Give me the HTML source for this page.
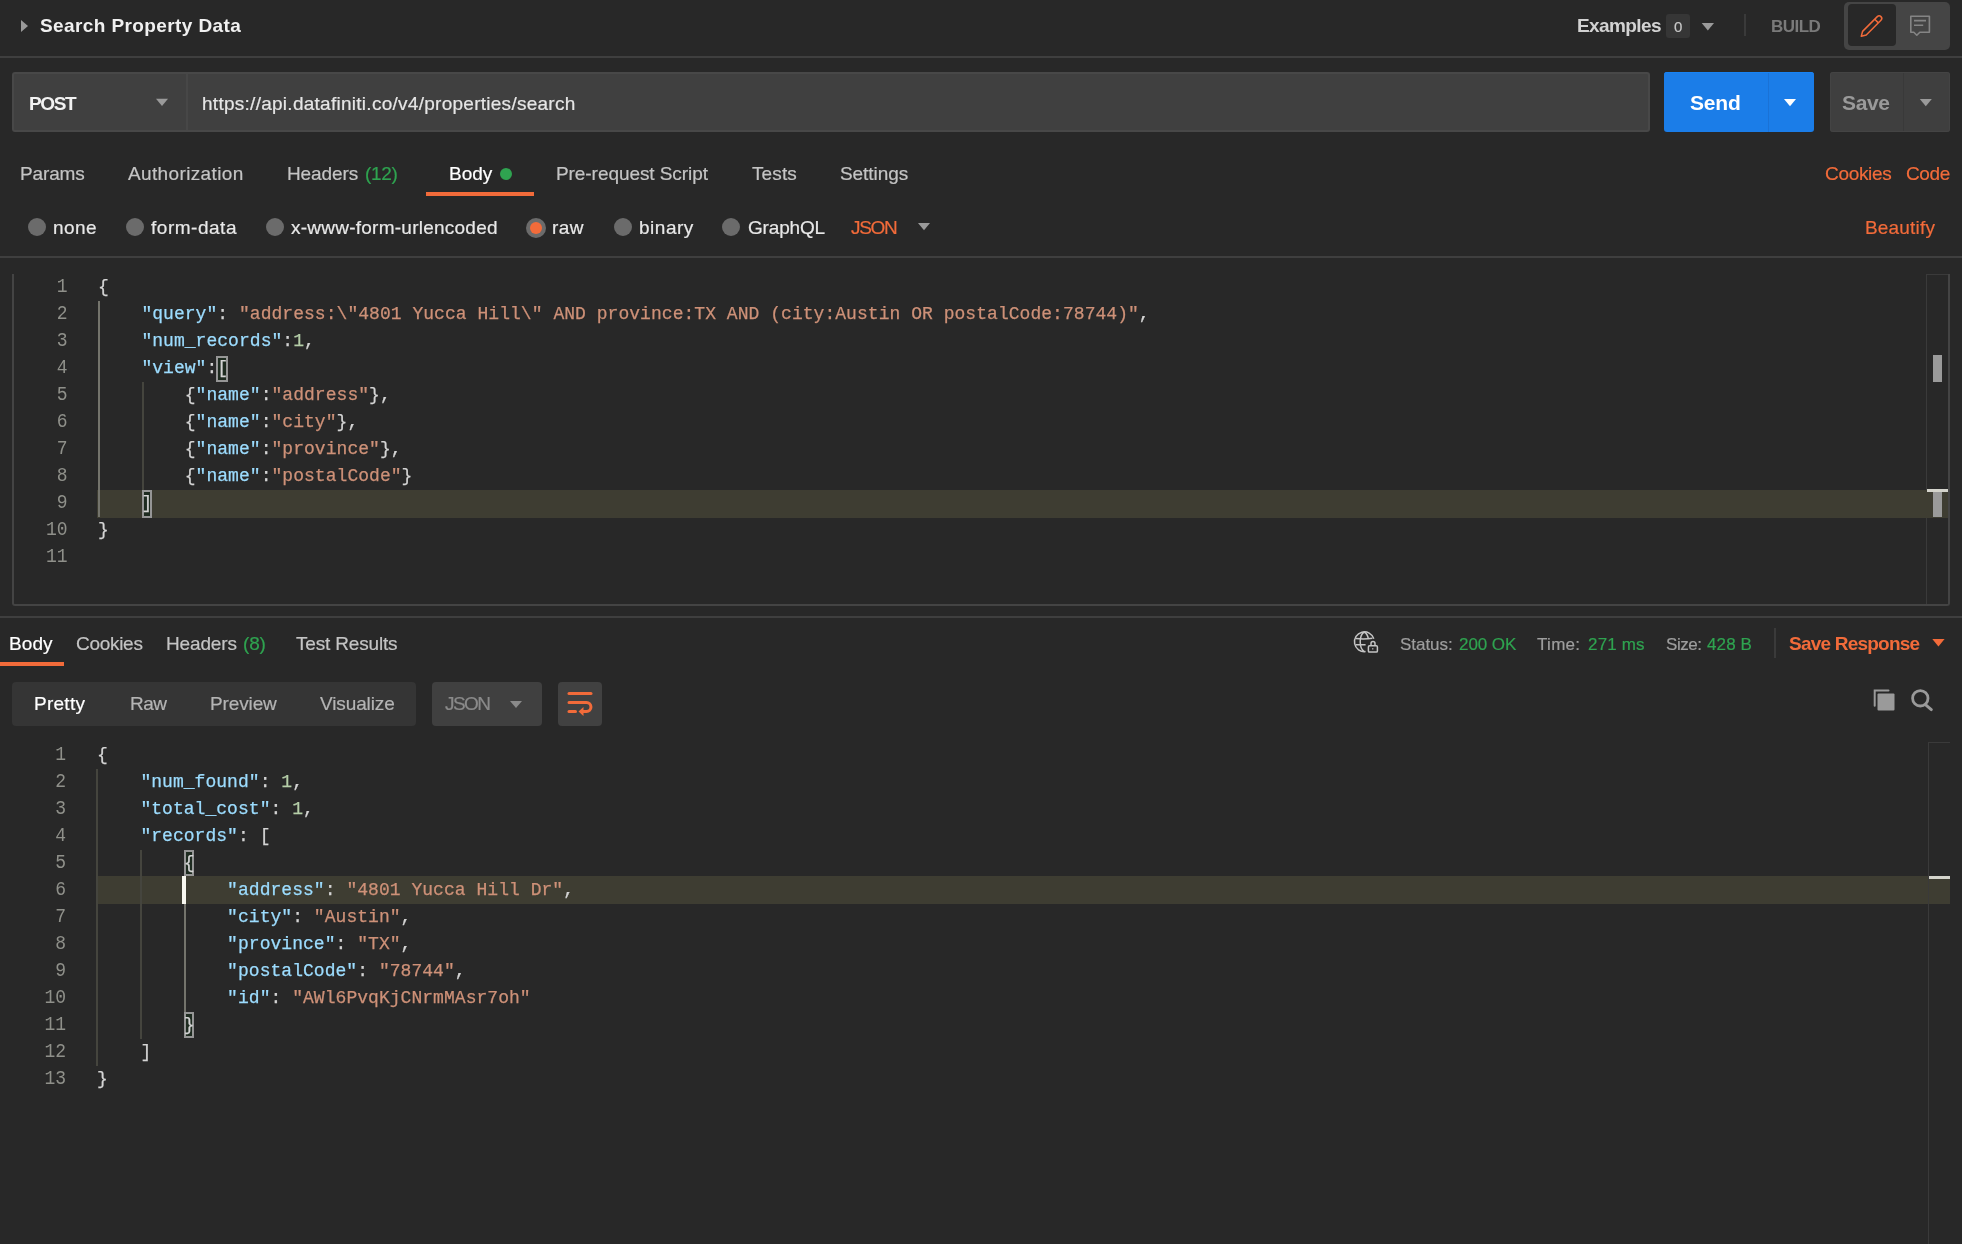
<!DOCTYPE html>
<html><head><meta charset="utf-8">
<style>
html,body{margin:0;padding:0;background:#282828;width:1962px;height:1244px;overflow:hidden;position:relative}
.abs{position:absolute}
.t{position:absolute;font-family:"Liberation Sans", sans-serif;line-height:1;white-space:pre;will-change:transform;-webkit-text-stroke:0.2px currentColor}
.ln{position:absolute;font-family:"Liberation Mono", monospace;font-size:18px;line-height:27px;color:#8f908a;text-align:right;white-space:pre;will-change:transform;transform:scaleY(1.12);transform-origin:0 18.3px}
.code{position:absolute;font-family:"Liberation Mono", monospace;font-size:18px;line-height:27px;white-space:pre;letter-spacing:0.04px;will-change:transform;-webkit-text-stroke:0.25px currentColor}
</style></head><body>
<!-- header -->
<div class="abs" style="left:0;top:56px;width:1962px;height:2px;background:#3f3f3f"></div>
<svg class="abs" style="left:0;top:0" width="40" height="56"><polygon points="21,20 28,26 21,32" fill="#9a9a9a"/></svg>
<div class="abs" style="left:1666px;top:14px;width:24px;height:24px;background:#363636;border-radius:3px"></div>
<svg class="abs" style="left:1700px;top:20px" width="16" height="12"><polygon points="1.7,2.9 14,2.9 7.85,10.4" fill="#9a9a9a"/></svg>
<div class="abs" style="left:1744px;top:14px;width:2px;height:22px;background:#3a3a3a"></div>
<div class="abs" style="left:1844px;top:2px;width:106px;height:48px;background:#454545;border-radius:5px"></div>
<div class="abs" style="left:1848px;top:4px;width:48px;height:42px;background:#282828;border-radius:4px"></div>
<svg class="abs" style="left:1848px;top:4px" width="48" height="42">
 <g transform="translate(13.3,32.3) rotate(-45)" fill="none" stroke="#f26b3a" stroke-width="1.5" stroke-linejoin="round">
  <path d="M0,0 L4.4,-2.6 L25.2,-2.6 A2.6,2.6 0 0 1 25.2,2.6 L4.4,2.6 Z"/>
  <path d="M21.6,-2.6 L21.6,2.6"/>
 </g>
</svg>
<svg class="abs" style="left:1900px;top:4px" width="46" height="42">
 <g fill="none" stroke="#858585" stroke-width="1.6">
  <path d="M10.8,12.2 H29.4 V28.2 H19.8 L16.8,31.2 L13.8,28.2 H10.8 Z" stroke-linejoin="round"/>
  <path d="M14,16.6 H26 M14,21.2 H23.2"/>
 </g>
</svg>
<!-- url row -->
<div class="abs" style="left:12px;top:72px;width:1634px;height:56px;background:#404040;border:2px solid #484848;border-radius:3px"></div>
<div class="abs" style="left:186px;top:74px;width:2px;height:56px;background:#474747"></div>
<svg class="abs" style="left:150px;top:92px" width="24" height="20"><polygon points="6,6.7 18,6.7 12,14" fill="#9a9a9a"/></svg>
<div class="abs" style="left:1664px;top:72px;width:150px;height:60px;background:#1b7de8;border-radius:3px;box-shadow:inset 0 1px 0 #1783f5"></div>
<div class="abs" style="left:1768px;top:73px;width:1px;height:59px;background:#1a72d6"></div>
<svg class="abs" style="left:1778px;top:92px" width="24" height="20"><polygon points="6,6.9 18,6.9 12,14.3" fill="#ffffff"/></svg>
<div class="abs" style="left:1830px;top:72px;width:120px;height:60px;background:#3f3f3f;border-radius:3px;box-shadow:inset 0 0 0 1px #444"></div>
<div class="abs" style="left:1903px;top:73px;width:1px;height:58px;background:#393939"></div>
<svg class="abs" style="left:1914px;top:92px" width="24" height="20"><polygon points="5.8,6.9 17.8,6.9 11.8,14.3" fill="#9a9a9a"/></svg>
<!-- tabs -->
<div class="abs" style="left:500px;top:168px;width:12px;height:12px;border-radius:50%;background:#2fa350"></div>
<div class="abs" style="left:426px;top:192px;width:108px;height:4px;background:#f26b3a"></div>
<!-- radios -->
<div class="abs" style="left:28px;top:218px;width:18px;height:18px;border-radius:50%;background:#6b6b6b"></div>
<div class="abs" style="left:126px;top:218px;width:18px;height:18px;border-radius:50%;background:#6b6b6b"></div>
<div class="abs" style="left:266px;top:218px;width:18px;height:18px;border-radius:50%;background:#6b6b6b"></div>
<div class="abs" style="left:526px;top:218px;width:20px;height:20px;border-radius:50%;background:#6b6b6b"></div>
<div class="abs" style="left:530px;top:222px;width:12px;height:12px;border-radius:50%;background:#f26b3a"></div>
<div class="abs" style="left:614px;top:218px;width:18px;height:18px;border-radius:50%;background:#6b6b6b"></div>
<div class="abs" style="left:722px;top:218px;width:18px;height:18px;border-radius:50%;background:#6b6b6b"></div>
<svg class="abs" style="left:912px;top:218px" width="24" height="16"><polygon points="6,5 18,5 12,12.2" fill="#9a9a9a"/></svg>
<div class="abs" style="left:0;top:256px;width:1962px;height:2px;background:#3f3f3f"></div>
<!-- request editor -->
<div class="abs" style="left:12px;top:274px;width:1934px;height:330px;border:2px solid #444;border-top:none;border-radius:0 0 3px 3px"></div>
<div class="abs" style="left:1926px;top:274px;width:1px;height:330px;background:#3a3a3a"></div>
<div class="abs" style="left:1926px;top:274px;width:22px;height:1px;background:#3a3a3a"></div>
<div class="abs" style="left:1933px;top:355px;width:9px;height:27px;background:#9a9a9a"></div>
<div class="abs" style="left:97px;top:490px;width:1851px;height:28px;background:#3e3d32"></div>
<div class="abs" style="left:98px;top:301px;width:2px;height:216px;background:#74746c"></div>
<div class="abs" style="left:142px;top:382px;width:2px;height:108px;background:#45453e"></div>
<div class="abs" style="left:216px;top:356px;width:12px;height:26px;box-sizing:border-box;border:2px solid #969696;background:#1e2b20"></div>
<div class="abs" style="left:142px;top:490px;width:10px;height:28px;box-sizing:border-box;border:2px solid #969696;background:#1e2b20"></div>
<div class="ln" style="left:0;width:67.5px;top:274px">1</div>
<div class="code" style="left:98px;top:274px"><span style="color:#d4d4d4">{</span></div>
<div class="ln" style="left:0;width:67.5px;top:301px">2</div>
<div class="code" style="left:98px;top:301px"><span style="color:#d4d4d4">    </span><span style="color:#9cdcfe">&quot;query&quot;</span><span style="color:#d4d4d4">: </span><span style="color:#ce9178">&quot;address:\&quot;4801 Yucca Hill\&quot; AND province:TX AND (city:Austin OR postalCode:78744)&quot;</span><span style="color:#d4d4d4">,</span></div>
<div class="ln" style="left:0;width:67.5px;top:328px">3</div>
<div class="code" style="left:98px;top:328px"><span style="color:#d4d4d4">    </span><span style="color:#9cdcfe">&quot;num_records&quot;</span><span style="color:#d4d4d4">:</span><span style="color:#b5cea8">1</span><span style="color:#d4d4d4">,</span></div>
<div class="ln" style="left:0;width:67.5px;top:355px">4</div>
<div class="code" style="left:98px;top:355px"><span style="color:#d4d4d4">    </span><span style="color:#9cdcfe">&quot;view&quot;</span><span style="color:#d4d4d4">:[</span></div>
<div class="ln" style="left:0;width:67.5px;top:382px">5</div>
<div class="code" style="left:98px;top:382px"><span style="color:#d4d4d4">        </span><span style="color:#d4d4d4">{</span><span style="color:#9cdcfe">&quot;name&quot;</span><span style="color:#d4d4d4">:</span><span style="color:#ce9178">&quot;address&quot;</span><span style="color:#d4d4d4">},</span></div>
<div class="ln" style="left:0;width:67.5px;top:409px">6</div>
<div class="code" style="left:98px;top:409px"><span style="color:#d4d4d4">        </span><span style="color:#d4d4d4">{</span><span style="color:#9cdcfe">&quot;name&quot;</span><span style="color:#d4d4d4">:</span><span style="color:#ce9178">&quot;city&quot;</span><span style="color:#d4d4d4">},</span></div>
<div class="ln" style="left:0;width:67.5px;top:436px">7</div>
<div class="code" style="left:98px;top:436px"><span style="color:#d4d4d4">        </span><span style="color:#d4d4d4">{</span><span style="color:#9cdcfe">&quot;name&quot;</span><span style="color:#d4d4d4">:</span><span style="color:#ce9178">&quot;province&quot;</span><span style="color:#d4d4d4">},</span></div>
<div class="ln" style="left:0;width:67.5px;top:463px">8</div>
<div class="code" style="left:98px;top:463px"><span style="color:#d4d4d4">        </span><span style="color:#d4d4d4">{</span><span style="color:#9cdcfe">&quot;name&quot;</span><span style="color:#d4d4d4">:</span><span style="color:#ce9178">&quot;postalCode&quot;</span><span style="color:#d4d4d4">}</span></div>
<div class="ln" style="left:0;width:67.5px;top:490px">9</div>
<div class="code" style="left:98px;top:490px"><span style="color:#d4d4d4">    </span><span style="color:#d4d4d4">]</span></div>
<div class="ln" style="left:0;width:67.5px;top:517px">10</div>
<div class="code" style="left:98px;top:517px"><span style="color:#d4d4d4">}</span></div>
<div class="ln" style="left:0;width:67.5px;top:544px">11</div>
<div class="abs" style="left:1927px;top:489px;width:21px;height:3px;background:#d4d4cc"></div>
<div class="abs" style="left:1933px;top:492px;width:9px;height:25px;background:#9a9a9a"></div>
<div class="abs" style="left:0;top:616px;width:1962px;height:2px;background:#3f3f3f"></div>
<!-- response tabs -->
<div class="abs" style="left:0;top:662px;width:64px;height:4px;background:#f26b3a"></div>
<svg class="abs" style="left:1348px;top:626px" width="36" height="32">
 <g fill="none" stroke="#c4c4c4" stroke-width="1.5">
  <path d="M25.8,12.7 A9.9,9.9 0 1 0 17.6,25.6"/>
  <path d="M16.4,6 C10.8,9 10.8,22.6 16.4,25.6 M16.4,6 C18.6,7.4 19.9,10 20.4,12.9"/>
  <path d="M7.8,12.6 Q16.5,13.6 24.4,12.3 M7.8,18.8 H17.6"/>
  <rect x="20.4" y="19.8" width="9" height="6.2" rx="1.1"/>
  <path d="M23,19.8 V17.5 A2,2 0 0 1 27,17.5 V19.8"/>
 </g>
 <rect x="24.3" y="22" width="1" height="1.6" fill="#c4c4c4"/>
</svg>
<div class="abs" style="left:1774px;top:628px;width:2px;height:30px;background:#3a3a3a"></div>
<svg class="abs" style="left:1926px;top:632px" width="24" height="20"><polygon points="6.3,7 18.6,7 12.45,14.6" fill="#f26b3a"/></svg>
<!-- response toolbar -->
<div class="abs" style="left:12px;top:682px;width:404px;height:44px;background:#353535;border-radius:4px"></div>
<div class="abs" style="left:432px;top:682px;width:110px;height:44px;background:#404040;border-radius:4px"></div>
<svg class="abs" style="left:504px;top:694px" width="24" height="20"><polygon points="6,7 18,7 12,14" fill="#8a8a8a"/></svg>
<div class="abs" style="left:558px;top:682px;width:44px;height:44px;background:#414141;border-radius:4px"></div>
<svg class="abs" style="left:558px;top:682px" width="44" height="44">
 <g fill="none" stroke="#f26b3a" stroke-width="3" stroke-linecap="round">
  <path d="M11,11.5 H33"/>
  <path d="M11,20.6 H28.5 A4.45,4.45 0 0 1 28.5,29.5 H24"/>
  <path d="M11,29.5 H17.5"/>
 </g>
 <polygon points="20.5,29.5 25.5,25 25.5,34" fill="#f26b3a"/>
</svg>
<svg class="abs" style="left:1866px;top:682px" width="36" height="36">
 <path d="M8.7,23.8 V8.6 H22.5" fill="none" stroke="#9a9a9a" stroke-width="2" stroke-linecap="round"/>
 <rect x="11.5" y="11.5" width="17" height="17" rx="1" fill="#9a9a9a"/>
</svg>
<svg class="abs" style="left:1904px;top:682px" width="36" height="36">
 <circle cx="16.3" cy="16.3" r="7.7" fill="none" stroke="#9a9a9a" stroke-width="2.8"/>
 <path d="M22,23.2 L27.3,27.6" stroke="#9a9a9a" stroke-width="3" stroke-linecap="round"/>
</svg>
<div class="abs" style="left:96px;top:876px;width:1854px;height:28px;background:#3e3d32"></div>
<div class="abs" style="left:96px;top:769px;width:2px;height:297px;background:#45453e"></div>
<div class="abs" style="left:140px;top:850px;width:2px;height:189px;background:#45453e"></div>
<div class="abs" style="left:184px;top:904px;width:2px;height:108px;background:#74746c"></div>
<div class="abs" style="left:184px;top:850px;width:10px;height:26px;box-sizing:border-box;border:2px solid #969696;background:#1e2b20"></div>
<div class="abs" style="left:184px;top:1012px;width:10px;height:26px;box-sizing:border-box;border:2px solid #969696;background:#1e2b20"></div>
<div class="ln" style="left:0;width:66px;top:742px">1</div>
<div class="code" style="left:97px;top:742px"><span style="color:#d4d4d4">{</span></div>
<div class="ln" style="left:0;width:66px;top:769px">2</div>
<div class="code" style="left:97px;top:769px"><span style="color:#d4d4d4">    </span><span style="color:#9cdcfe">&quot;num_found&quot;</span><span style="color:#d4d4d4">: </span><span style="color:#b5cea8">1</span><span style="color:#d4d4d4">,</span></div>
<div class="ln" style="left:0;width:66px;top:796px">3</div>
<div class="code" style="left:97px;top:796px"><span style="color:#d4d4d4">    </span><span style="color:#9cdcfe">&quot;total_cost&quot;</span><span style="color:#d4d4d4">: </span><span style="color:#b5cea8">1</span><span style="color:#d4d4d4">,</span></div>
<div class="ln" style="left:0;width:66px;top:823px">4</div>
<div class="code" style="left:97px;top:823px"><span style="color:#d4d4d4">    </span><span style="color:#9cdcfe">&quot;records&quot;</span><span style="color:#d4d4d4">: [</span></div>
<div class="ln" style="left:0;width:66px;top:850px">5</div>
<div class="code" style="left:97px;top:850px"><span style="color:#d4d4d4">        </span><span style="color:#d4d4d4">{</span></div>
<div class="ln" style="left:0;width:66px;top:877px">6</div>
<div class="code" style="left:97px;top:877px"><span style="color:#d4d4d4">            </span><span style="color:#9cdcfe">&quot;address&quot;</span><span style="color:#d4d4d4">: </span><span style="color:#ce9178">&quot;4801 Yucca Hill Dr&quot;</span><span style="color:#d4d4d4">,</span></div>
<div class="ln" style="left:0;width:66px;top:904px">7</div>
<div class="code" style="left:97px;top:904px"><span style="color:#d4d4d4">            </span><span style="color:#9cdcfe">&quot;city&quot;</span><span style="color:#d4d4d4">: </span><span style="color:#ce9178">&quot;Austin&quot;</span><span style="color:#d4d4d4">,</span></div>
<div class="ln" style="left:0;width:66px;top:931px">8</div>
<div class="code" style="left:97px;top:931px"><span style="color:#d4d4d4">            </span><span style="color:#9cdcfe">&quot;province&quot;</span><span style="color:#d4d4d4">: </span><span style="color:#ce9178">&quot;TX&quot;</span><span style="color:#d4d4d4">,</span></div>
<div class="ln" style="left:0;width:66px;top:958px">9</div>
<div class="code" style="left:97px;top:958px"><span style="color:#d4d4d4">            </span><span style="color:#9cdcfe">&quot;postalCode&quot;</span><span style="color:#d4d4d4">: </span><span style="color:#ce9178">&quot;78744&quot;</span><span style="color:#d4d4d4">,</span></div>
<div class="ln" style="left:0;width:66px;top:985px">10</div>
<div class="code" style="left:97px;top:985px"><span style="color:#d4d4d4">            </span><span style="color:#9cdcfe">&quot;id&quot;</span><span style="color:#d4d4d4">: </span><span style="color:#ce9178">&quot;AWl6PvqKjCNrmMAsr7oh&quot;</span></div>
<div class="ln" style="left:0;width:66px;top:1012px">11</div>
<div class="code" style="left:97px;top:1012px"><span style="color:#d4d4d4">        </span><span style="color:#d4d4d4">}</span></div>
<div class="ln" style="left:0;width:66px;top:1039px">12</div>
<div class="code" style="left:97px;top:1039px"><span style="color:#d4d4d4">    </span><span style="color:#d4d4d4">]</span></div>
<div class="ln" style="left:0;width:66px;top:1066px">13</div>
<div class="code" style="left:97px;top:1066px"><span style="color:#d4d4d4">}</span></div>
<div class="abs" style="left:182px;top:876px;width:4px;height:28px;background:#f8f8f0"></div>
<div class="abs" style="left:1928px;top:742px;width:1px;height:502px;background:#3a3a3a"></div>
<div class="abs" style="left:1928px;top:742px;width:22px;height:1px;background:#3a3a3a"></div>
<div class="abs" style="left:1929px;top:876px;width:21px;height:3px;background:#d4d4cc"></div>
<div class="t" style="left:40.1px;top:15.9px;font-size:19px;font-weight:700;color:#f0f0f0;letter-spacing:0.398px;-webkit-text-stroke:0">Search Property Data</div>
<div class="t" style="left:1577.3px;top:16.3px;font-size:19px;font-weight:700;color:#d2d2d2;letter-spacing:-0.592px;-webkit-text-stroke:0">Examples</div>
<div class="t" style="left:1674.0px;top:19.4px;font-size:15px;font-weight:400;color:#c8c8c8;letter-spacing:0.000px">0</div>
<div class="t" style="left:1770.7px;top:17.7px;font-size:17px;font-weight:700;color:#7a7a7a;letter-spacing:-0.511px;-webkit-text-stroke:0">BUILD</div>
<div class="t" style="left:29.4px;top:93.9px;font-size:19px;font-weight:700;color:#f2f2f2;letter-spacing:-1.334px;-webkit-text-stroke:0">POST</div>
<div class="t" style="left:201.7px;top:93.9px;font-size:19px;font-weight:400;color:#e6e6e6;letter-spacing:0.269px">https://api.datafiniti.co/v4/properties/search</div>
<div class="t" style="left:1689.9px;top:91.8px;font-size:21px;font-weight:700;color:#ffffff;letter-spacing:-0.211px;-webkit-text-stroke:0">Send</div>
<div class="t" style="left:1841.7px;top:91.8px;font-size:21px;font-weight:700;color:#9a9a9a;letter-spacing:-0.362px;-webkit-text-stroke:0">Save</div>
<div class="t" style="left:19.7px;top:164.2px;font-size:19px;font-weight:400;color:#c4c4c4;letter-spacing:-0.145px">Params</div>
<div class="t" style="left:127.5px;top:164.2px;font-size:19px;font-weight:400;color:#c4c4c4;letter-spacing:0.361px">Authorization</div>
<div class="t" style="left:287.1px;top:164.2px;font-size:19px;font-weight:400;color:#c4c4c4;letter-spacing:-0.104px">Headers</div>
<div class="t" style="left:364.9px;top:164.2px;font-size:19px;font-weight:400;color:#2fa350;letter-spacing:-0.324px">(12)</div>
<div class="t" style="left:449.4px;top:164.2px;font-size:19px;font-weight:400;color:#ffffff;letter-spacing:-0.003px">Body</div>
<div class="t" style="left:556.0px;top:164.2px;font-size:19px;font-weight:400;color:#c4c4c4;letter-spacing:-0.068px">Pre-request Script</div>
<div class="t" style="left:751.8px;top:164.2px;font-size:19px;font-weight:400;color:#c4c4c4;letter-spacing:0.108px">Tests</div>
<div class="t" style="left:840.2px;top:164.2px;font-size:19px;font-weight:400;color:#c4c4c4;letter-spacing:-0.070px">Settings</div>
<div class="t" style="left:1824.6px;top:163.9px;font-size:19px;font-weight:400;color:#f26b3a;letter-spacing:-0.308px">Cookies</div>
<div class="t" style="left:1905.5px;top:163.9px;font-size:19px;font-weight:400;color:#f26b3a;letter-spacing:-0.355px">Code</div>
<div class="t" style="left:52.5px;top:217.7px;font-size:19px;font-weight:400;color:#e8e8e8;letter-spacing:0.430px">none</div>
<div class="t" style="left:150.5px;top:217.7px;font-size:19px;font-weight:400;color:#e8e8e8;letter-spacing:0.521px">form-data</div>
<div class="t" style="left:290.9px;top:217.7px;font-size:19px;font-weight:400;color:#e8e8e8;letter-spacing:0.244px">x-www-form-urlencoded</div>
<div class="t" style="left:552.2px;top:217.7px;font-size:19px;font-weight:400;color:#e8e8e8;letter-spacing:0.458px">raw</div>
<div class="t" style="left:638.5px;top:217.7px;font-size:19px;font-weight:400;color:#e8e8e8;letter-spacing:0.525px">binary</div>
<div class="t" style="left:747.8px;top:217.7px;font-size:19px;font-weight:400;color:#e8e8e8;letter-spacing:-0.165px">GraphQL</div>
<div class="t" style="left:851.1px;top:217.7px;font-size:19px;font-weight:400;color:#f26b3a;letter-spacing:-1.347px">JSON</div>
<div class="t" style="left:1865.0px;top:217.8px;font-size:19px;font-weight:400;color:#f26b3a;letter-spacing:0.180px">Beautify</div>
<div class="t" style="left:9.4px;top:633.9px;font-size:19px;font-weight:400;color:#ffffff;letter-spacing:0.072px">Body</div>
<div class="t" style="left:75.6px;top:633.9px;font-size:19px;font-weight:400;color:#c4c4c4;letter-spacing:-0.294px">Cookies</div>
<div class="t" style="left:165.7px;top:633.9px;font-size:19px;font-weight:400;color:#c4c4c4;letter-spacing:-0.147px">Headers</div>
<div class="t" style="left:243.1px;top:633.9px;font-size:19px;font-weight:400;color:#2fa350;letter-spacing:-0.178px">(8)</div>
<div class="t" style="left:295.6px;top:633.9px;font-size:19px;font-weight:400;color:#c4c4c4;letter-spacing:-0.174px">Test Results</div>
<div class="t" style="left:1399.8px;top:635.6px;font-size:17px;font-weight:400;color:#9e9e9e;letter-spacing:-0.032px">Status:</div>
<div class="t" style="left:1459.2px;top:635.6px;font-size:17px;font-weight:400;color:#2fa350;letter-spacing:-0.076px">200 OK</div>
<div class="t" style="left:1537.2px;top:635.6px;font-size:17px;font-weight:400;color:#9e9e9e;letter-spacing:0.305px">Time:</div>
<div class="t" style="left:1587.5px;top:635.6px;font-size:17px;font-weight:400;color:#2fa350;letter-spacing:0.175px">271 ms</div>
<div class="t" style="left:1665.6px;top:635.6px;font-size:17px;font-weight:400;color:#9e9e9e;letter-spacing:-0.459px">Size:</div>
<div class="t" style="left:1707.2px;top:635.6px;font-size:17px;font-weight:400;color:#2fa350;letter-spacing:0.113px">428 B</div>
<div class="t" style="left:1789.3px;top:633.9px;font-size:19px;font-weight:700;color:#f26b3a;letter-spacing:-0.782px;-webkit-text-stroke:0">Save Response</div>
<div class="t" style="left:34.4px;top:694.3px;font-size:19px;font-weight:400;color:#ffffff;letter-spacing:0.263px">Pretty</div>
<div class="t" style="left:129.6px;top:694.3px;font-size:19px;font-weight:400;color:#b4b4b4;letter-spacing:-0.539px">Raw</div>
<div class="t" style="left:210.1px;top:694.3px;font-size:19px;font-weight:400;color:#b4b4b4;letter-spacing:-0.125px">Preview</div>
<div class="t" style="left:319.8px;top:694.3px;font-size:19px;font-weight:400;color:#b4b4b4;letter-spacing:-0.123px">Visualize</div>
<div class="t" style="left:444.6px;top:694.3px;font-size:19px;font-weight:400;color:#8a8a8a;letter-spacing:-1.572px">JSON</div>
</body></html>
